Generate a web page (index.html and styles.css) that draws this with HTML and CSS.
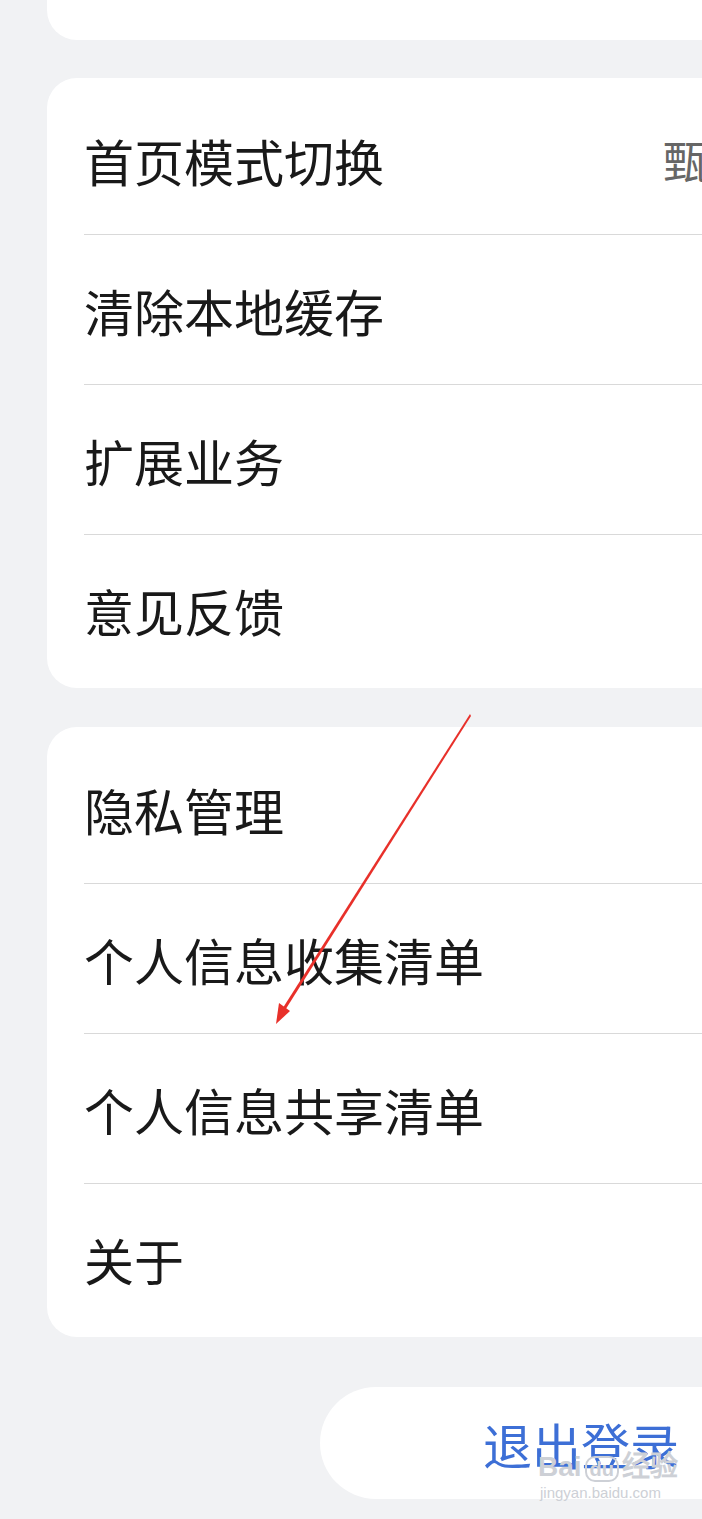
FILE: index.html
```html
<!DOCTYPE html>
<html lang="zh-CN">
<head>
  <meta charset="UTF-8" />
  <title>设置</title>
  <link rel="stylesheet" href="styles.css">
</head>
<body>

  <!-- Top card (cut off) -->
  <div class="card card-top"></div>

  <!-- General settings -->
  <div class="card">
    <div class="row">
      <span class="label">首页模式切换</span>
      <span class="value">甄选</span>
    </div>
    <div class="row"><span class="label">清除本地缓存</span></div>
    <div class="row"><span class="label">扩展业务</span></div>
    <div class="row"><span class="label">意见反馈</span></div>
  </div>

  <!-- Privacy -->
  <div class="card">
    <div class="row"><span class="label">隐私管理</span></div>
    <div class="row"><span class="label">个人信息收集清单</span></div>
    <div class="row"><span class="label">个人信息共享清单</span></div>
    <div class="row"><span class="label">关于</span></div>
  </div>

  <!-- Logout -->
  <div class="logout">
    <span>退出登录</span>
  </div>

  <!-- Annotation arrow -->
  <svg class="arrow" width="702" height="1519" viewBox="0 0 702 1519">
    <polygon points="470,714 471,716 282,1015 279,1014" fill="#e8302a" />
    <polygon points="276,1024 279,1003 290,1011" fill="#e8302a" />
  </svg>

  <!-- Watermark -->
  <div class="watermark">
    <div class="wm-logo">Bai<span class="wm-paw">du</span>经验</div>
    <div class="wm-url">jingyan.baidu.com</div>
  </div>

</body>
</html>
```

FILE: styles.css
```css
body {
  margin: 0;
  padding: 0;
  width: 702px;
  height: 1519px;
  overflow: hidden;
  position: relative;
  background-color: #f1f2f4;
  font-family: "Noto Sans CJK SC", "Noto Sans", sans-serif;
}

.card {
  margin-left: 47px;
  width: 700px;
  background-color: #ffffff;
  border-radius: 30px;
  padding: 7px 0 3px 0;
  margin-bottom: 39px;
}

.card-top {
  height: 70px;
  padding: 0;
  margin-top: -30px;
  margin-bottom: 38px;
}

.row {
  height: 149px;
  margin-left: 37px;
  display: flex;
  align-items: center;
  border-bottom: 1px solid #d9d9d9;
  white-space: nowrap;
}

.row:last-child {
  border-bottom: none;
  height: 150px;
}

.label {
  font-size: 50px;
  color: #191919;
  flex: 1;
}

.value {
  font-size: 45px;
  color: #666666;
  width: 84px;
  overflow: hidden;
}

.logout {
  margin-left: 320px;
  margin-top: 50px;
  width: 460px;
  height: 112px;
  background-color: #ffffff;
  border-radius: 56px;
  display: flex;
  align-items: center;
  padding-left: 163px;
  box-sizing: border-box;
}

.logout span {
  font-size: 49px;
  color: #3d6fd6;
}

.arrow {
  position: absolute;
  left: 0;
  top: 0;
  pointer-events: none;
}

.watermark {
  position: absolute;
  left: 538px;
  top: 1452px;
  color: #cdd0d6;
  font-family: "Liberation Sans", sans-serif;
}

.wm-logo {
  font-size: 28px;
  line-height: 30px;
  font-weight: bold;
}

.wm-paw {
  font-size: 20px;
  border: 2px solid #cdd0d6;
  border-radius: 10px;
  padding: 0 3px;
  margin: 0 3px;
}

.wm-url {
  font-size: 15px;
  line-height: 18px;
  margin-left: 2px;
}
```
